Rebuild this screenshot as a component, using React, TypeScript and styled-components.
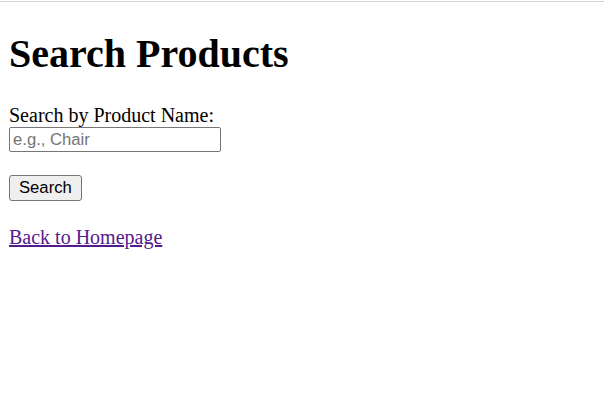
import React from "react";
import styled, { createGlobalStyle } from "styled-components";

const Global = createGlobalStyle`
  html { border-top: 1px solid #d3d3d3; margin-top: 1px; }
  body { margin: 8px 9px; font-family: "Liberation Serif", "Times New Roman", serif; font-size: 20px; color: #000; background: #fff; }
`;

const Title = styled.h1`
  font-size: 40px;
  font-weight: bold;
  margin: 20px 0 26.8px;
`;

const SearchForm = styled.form`
  margin: 0;
`;

const Label = styled.label`
  display: block;
`;

const Input = styled.input`
  box-sizing: border-box;
  width: 212px;
  height: 25px;
  padding: 1px 3px;
  font-family: "Liberation Sans", Arial, sans-serif;
  font-size: 16.67px;
  border: 1px solid #767676;
  border-radius: 2px;
  &::placeholder { color: #757575; }
`;

const Button = styled.button`
  box-sizing: border-box;
  height: 26px;
  padding: 1px 9px;
  font-family: "Liberation Sans", Arial, sans-serif;
  font-size: 16.67px;
  color: #000;
  background: #efefef;
  border: 1px solid #767676;
  border-radius: 3px;
`;

const HomeLink = styled.a`
  display: inline-block;
  margin-top: 2px;
  color: #551a8b;
  text-decoration: underline;
`;

export default function App() {
  return (
    <>
      <Global />
      <Title>Search Products</Title>
      <SearchForm onSubmit={(e) => e.preventDefault()}>
        <Label htmlFor="q">Search by Product Name:</Label>
        <Input id="q" type="text" placeholder="e.g., Chair" />
        <br />
        <br />
        <Button type="submit">Search</Button>
      </SearchForm>
      <br />
      <HomeLink href="#">Back to Homepage</HomeLink>
    </>
  );
}
